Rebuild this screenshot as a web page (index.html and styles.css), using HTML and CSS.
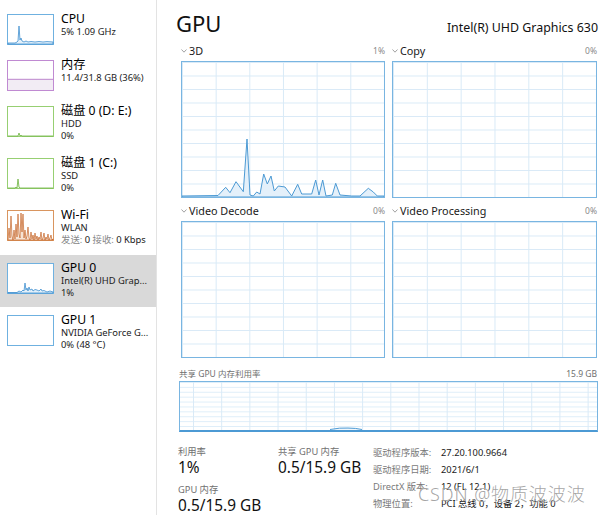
FILE: index.html
```html
<!DOCTYPE html>
<html lang="zh-CN">
<head>
<meta charset="utf-8">
<title>GPU</title>
<link rel="stylesheet" href="styles.css">
</head>
<body>
<div class="app">
  <aside class="sidebar">
    <div class="item short">
      <svg class="thumb" viewBox="0 0 47 31" width="47" height="31">
        <rect x="0.5" y="0.5" width="46" height="30" fill="#fff" stroke="#6fb1e0"/>
        <path d="M1 29 L8 29 L10 28 L11 27 L12 12 L13 26 L14 24 L15 27 L17 28 L19 27 L21 28 L24 27.5 L28 28 L32 27.5 L36 28 L40 27.6 L46 28 L46 30 L1 30 Z" fill="#e3f0fa" stroke="#3f8fcf" stroke-width="0.8"/>
      </svg>
      <div class="txt">
        <div class="ttl">CPU</div>
        <div class="sub">5% 1.09 GHz</div>
      </div>
    </div>
    <div class="item short">
      <svg class="thumb" viewBox="0 0 47 31" width="47" height="31">
        <rect x="0.5" y="0.5" width="46" height="30" fill="#fff" stroke="#c08ad2"/>
        <rect x="1" y="19" width="45" height="11" fill="#f2ecf4"/>
        <line x1="1" y1="19.3" x2="46" y2="19.3" stroke="#b679c8" stroke-width="0.9"/>
      </svg>
      <div class="txt">
        <div class="ttl">内存</div>
        <div class="sub">11.4/31.8 GB (36%)</div>
      </div>
    </div>
    <div class="item">
      <svg class="thumb" viewBox="0 0 47 31" width="47" height="31">
        <rect x="0.5" y="0.5" width="46" height="30" fill="#fff" stroke="#97cf72"/>
        <path d="M1 30 L11 30 L12 27 L13 30 L14 29 L15 30 L46 30" fill="none" stroke="#6cb33f" stroke-width="0.8"/>
      </svg>
      <div class="txt">
        <div class="ttl">磁盘 0 (D: E:)</div>
        <div class="sub">HDD</div>
        <div class="sub">0%</div>
      </div>
    </div>
    <div class="item">
      <svg class="thumb" viewBox="0 0 47 31" width="47" height="31">
        <rect x="0.5" y="0.5" width="46" height="30" fill="#fff" stroke="#97cf72"/>
        <path d="M1 30 L8 30 L9 29 L10 30 L11 21 L12 29 L13 30 L46 30" fill="#eaf5e1" stroke="#6cb33f" stroke-width="0.8"/>
      </svg>
      <div class="txt">
        <div class="ttl">磁盘 1 (C:)</div>
        <div class="sub">SSD</div>
        <div class="sub">0%</div>
      </div>
    </div>
    <div class="item wifi">
      <svg class="thumb" viewBox="0 0 47 31" width="47" height="31">
        <rect x="0.5" y="0.5" width="46" height="30" fill="#fff" stroke="#d9955f"/>
        <path d="M1 30 L2 18 L3 28 L4 6 L5 26 L6 30 L7 20 L8 29 L9 14 L10 27 L11 4 L12 24 L13 28 L14 3 L15 22 L16 4 L17 28 L18 20 L19 29 L20 26 L21 17 L22 28 L23 30 L24 22 L25 29 L26 25 L27 30 L28 23 L29 29 L30 26 L31 30 L32 27 L33 29 L34 22 L35 30 L36 28 L37 23 L38 30 L39 27 L40 29 L41 24 L42 30 L43 28 L44 25 L45 30 L46 29 L46 30 Z" fill="#f6e3d4" stroke="#c6662a" stroke-width="0.7"/>
      </svg>
      <div class="txt">
        <div class="ttl">Wi-Fi</div>
        <div class="sub">WLAN</div>
        <div class="sub"><span class="muted">发送:</span> 0 <span class="muted">接收:</span> 0 Kbps</div>
      </div>
    </div>
    <div class="item selected">
      <svg class="thumb" viewBox="0 0 47 31" width="47" height="31">
        <rect x="0.5" y="0.5" width="46" height="30" fill="#fff" stroke="#6fb1e0"/>
        <path d="M1 29.5 L10 29.5 L12 28 L14 29 L16 27 L17 28 L18 20 L19 27 L20 25 L21 28 L22 24 L23 27 L25 26 L26 28 L28 26.5 L30 27 L32 28 L34 26 L35 28 L37 27.5 L40 29 L43 28 L46 29 L46 30 L1 30 Z" fill="#e3f0fa" stroke="#3f8fcf" stroke-width="0.8"/>
      </svg>
      <div class="txt">
        <div class="ttl">GPU 0</div>
        <div class="sub">Intel(R) UHD Grap...</div>
        <div class="sub">1%</div>
      </div>
    </div>
    <div class="item">
      <svg class="thumb" viewBox="0 0 47 31" width="47" height="31">
        <rect x="0.5" y="0.5" width="46" height="30" fill="#fff" stroke="#6fb1e0"/>
      </svg>
      <div class="txt">
        <div class="ttl">GPU 1</div>
        <div class="sub">NVIDIA GeForce G...</div>
        <div class="sub">0% (48 °C)</div>
      </div>
    </div>
  </aside>

  <main class="main">
    <header class="header">
      <h1 class="title">GPU</h1>
      <div class="model">Intel(R) UHD Graphics 630</div>
    </header>

    <div class="engines">
      <section class="engine">
        <div class="elabel"><svg class="chev" viewBox="0 0 6 4" width="6" height="4"><path d="M0.5 0.5 L3 3.2 L5.5 0.5" fill="none" stroke="#8a8a8a" stroke-width="0.8"/></svg><span class="ename">3D</span><span class="epct">1%</span></div>
        <div class="chart">
          <svg class="plot" viewBox="0 0 202 135" preserveAspectRatio="none">
            <path d="M0 134 L36 133.5 L43.7 125.3 L48 130.7 L54 119.7 L61.3 129.7 L65 77 L68 133 L71.3 134 L74.7 130 L78 132 L81.7 112 L85.3 122 L89 114 L92.3 129 L96.3 124 L103 125 L109.7 134 L115.7 122.3 L119.7 132 L129.7 132 L133.7 118 L137 133 L140.7 118 L144 134 L150.3 133 L153.7 121.3 L158 133 L169.7 134 L178 134 L186.3 126.3 L191.3 130 L195.3 134 L202 134 L202 135 L0 135 Z" fill="#e4f0fa" stroke="#4c9ad4" stroke-width="1"/>
          </svg>
        </div>
      </section>
      <section class="engine">
        <div class="elabel"><svg class="chev" viewBox="0 0 6 4" width="6" height="4"><path d="M0.5 0.5 L3 3.2 L5.5 0.5" fill="none" stroke="#8a8a8a" stroke-width="0.8"/></svg><span class="ename">Copy</span><span class="epct">0%</span></div>
        <div class="chart"></div>
      </section>
      <section class="engine">
        <div class="elabel"><svg class="chev" viewBox="0 0 6 4" width="6" height="4"><path d="M0.5 0.5 L3 3.2 L5.5 0.5" fill="none" stroke="#8a8a8a" stroke-width="0.8"/></svg><span class="ename">Video Decode</span><span class="epct">0%</span></div>
        <div class="chart"></div>
      </section>
      <section class="engine">
        <div class="elabel"><svg class="chev" viewBox="0 0 6 4" width="6" height="4"><path d="M0.5 0.5 L3 3.2 L5.5 0.5" fill="none" stroke="#8a8a8a" stroke-width="0.8"/></svg><span class="ename">Video Processing</span><span class="epct">0%</span></div>
        <div class="chart"></div>
      </section>
    </div>

    <div class="shared">
      <div class="slabel"><span>共享 GPU 内存利用率</span><span>15.9 GB</span></div>
      <div class="schart">
        <svg class="plot" viewBox="0 0 417 49" preserveAspectRatio="none">
          <path d="M150 48.5 Q160 46.5 168 47 Q176 47 182 48.5" fill="#e4f0fa" stroke="#4c9ad4" stroke-width="1"/>
        </svg>
      </div>
    </div>

    <div class="stats">
      <div class="col">
        <div class="slbl">利用率</div>
        <div class="sval">1%</div>
        <div class="slbl gap">GPU 内存</div>
        <div class="sval">0.5/15.9 GB</div>
      </div>
      <div class="col">
        <div class="slbl">共享 GPU 内存</div>
        <div class="sval">0.5/15.9 GB</div>
      </div>
      <div class="info">
        <div class="k">驱动程序版本:</div><div class="v">27.20.100.9664</div>
        <div class="k">驱动程序日期:</div><div class="v">2021/6/1</div>
        <div class="k">DirectX 版本:</div><div class="v">12 (FL 12.1)</div>
        <div class="k">物理位置:</div><div class="v">PCI 总线 0，设备 2，功能 0</div>
      </div>
    </div>
  </main>
</div>
<div class="watermark">CSDN @物质波波波</div>
</body>
</html>
```
FILE: styles.css
```css
* { box-sizing: border-box; }
html, body {
  margin: 0;
  padding: 0;
  background: #fff;
}
body {
  width: 606px;
  height: 515px;
  overflow: hidden;
  font-family: "Noto Sans", "Noto Sans CJK SC", sans-serif;
  color: #1a1a1a;
  position: relative;
}
.app {
  display: flex;
  height: 515px;
}
.sidebar {
  width: 157px;
  flex: none;
  border-right: 1px solid #e3e3e3;
  padding-top: 6px;
}
.item {
  height: 52px;
  display: flex;
  gap: 7px;
  padding: 8px 0 0 7px;
}
.item.short { height: 46px; }
.item.wifi { height: 53px; }
.item.selected { background: #d9d9d9; }
.thumb { display: block; flex: none; }
.txt { margin-top: -2.8px; white-space: nowrap; }
.ttl {
  font-size: 12.2px;
  line-height: 15px;
  color: #000;
}
.sub {
  font-size: 9.4px;
  line-height: 11.7px;
  color: #222;
}
.muted { color: #888; }

.main {
  flex: 1;
  padding: 10px 8px 0 22px;
  min-width: 0;
}
.header {
  display: flex;
  justify-content: space-between;
  align-items: baseline;
  height: 26px;
}
.title {
  margin: 0 0 0 -3px;
  font-size: 22px;
  line-height: 26px;
  font-weight: 400;
  color: #111;
}
.model {
  font-size: 12.4px;
  color: #111;
}
.engines {
  margin: 7.5px 1px 0 2px;
  display: grid;
  grid-template-columns: 204px 205px;
  column-gap: 7px;
  row-gap: 5.5px;
}
.elabel {
  display: flex;
  align-items: center;
  height: 13px;
  line-height: 13px;
  margin-bottom: 4.5px;
}
.chev {
  display: block;
  flex: none;
  margin: 1px 2px 0 0;
}
.ename {
  font-size: 10.8px;
  color: #1a1a1a;
  flex: 1;
}
.epct {
  font-size: 8.5px;
  color: #8a8a8a;
}
.chart {
  height: 137px;
  border: 1px solid #79b5e1;
  background-image:
    linear-gradient(to right, #d9eaf7 1px, transparent 1px),
    linear-gradient(to bottom, #d9eaf7 1px, transparent 1px);
  background-size: calc(100% / 6) 10%;
}
.plot {
  display: block;
  width: 100%;
  height: 100%;
}
.shared { margin-top: 10px; }
.slabel {
  display: flex;
  justify-content: space-between;
  font-size: 8.5px;
  line-height: 12px;
  color: #6f6f6f;
  margin-bottom: 1px;
  padding-right: 1px;
}
.schart {
  height: 51px;
  border: 1px solid #79b5e1;
  border-bottom: 2px solid #4c9ad4;
  background-image:
    linear-gradient(to right, #d9eaf7 1px, transparent 1px),
    linear-gradient(to bottom, #dfeef9 1px, transparent 1px);
  background-size: 28.2px 4.9px;
  background-position: 13px 0, 0 0;
}
.stats {
  margin-top: 14px;
  margin-left: -1px;
  display: grid;
  grid-template-columns: 100px 95px 1fr;
}
.slbl {
  font-size: 9.3px;
  line-height: 12px;
  color: #707070;
}
.slbl.gap { margin-top: 6.5px; }
.sval {
  font-size: 15.4px;
  line-height: 19px;
  color: #111;
}
.info {
  display: grid;
  grid-template-columns: 68px auto;
  font-size: 9.3px;
  line-height: 13.4px;
}
.info .k { color: #7a7a7a; white-space: nowrap; }
.info .v { color: #1a1a1a; white-space: nowrap; }
.watermark {
  position: absolute;
  left: 418px;
  top: 482px;
  font-size: 18px;
  line-height: 24px;
  color: rgba(125, 125, 125, 0.7);
  font-weight: 300;
  letter-spacing: 0.9px;
  white-space: nowrap;
  text-shadow: 0 0 1px #fff;
}
```
